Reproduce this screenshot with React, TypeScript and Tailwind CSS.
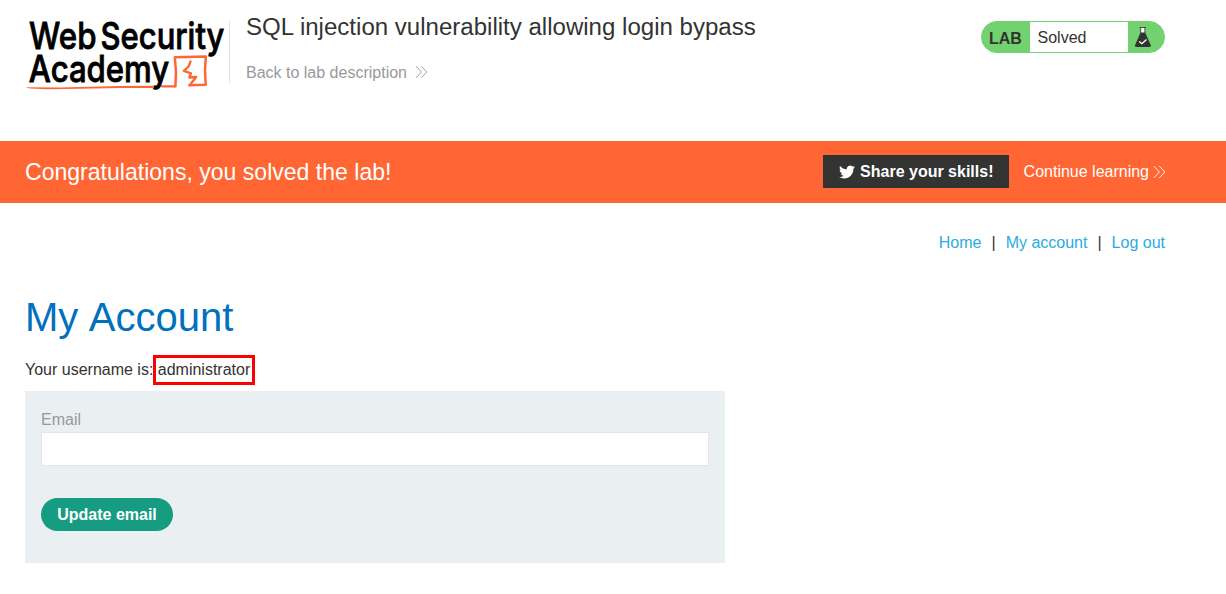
import React from "react";

function Chevrons({ className }: { className: string }) {
  return (
    <svg className={className} width="13" height="14" viewBox="0 0 13 14" fill="none" stroke="currentColor" strokeWidth="0.9">
      <path d="M0.8 1 L6.4 7 L0.8 13 M6.2 1 L11.8 7 L6.2 13" />
    </svg>
  );
}

function Logo() {
  return (
    <svg className="block shrink-0 overflow-visible" width="204" height="80" viewBox="25 15 204 80">
      <g fill="#000" stroke="#000" strokeWidth="0.8" fontFamily="Inter, sans-serif" fontWeight="500" fontSize="36.6">
        <text x="29" y="49.2" textLength="67.5" lengthAdjust="spacingAndGlyphs">Web</text>
        <text x="100.6" y="49.2" textLength="123.8" lengthAdjust="spacingAndGlyphs">Security</text>
        <text x="28.8" y="81.7" textLength="140.4" lengthAdjust="spacingAndGlyphs">Academy</text>
      </g>
      <path fill="#ff6633" d="M25.5 87.2 L60 87.4 L120 86 L154 85.8 L154 88 L120 88.1 L80 88.8 L48 89.2 L30 88.6 Z" />
      <g fill="none" stroke="#ff6633" strokeLinecap="round" strokeLinejoin="round">
        <path strokeWidth="2.2" d="M162 86.4 L175.2 86.3" />
        <path strokeWidth="2.5" d="M175.4 86.3 L176 72 L174.8 57.2 L205.8 56.6 L205 70 L205.7 84.8 L189.3 85.2" />
        <path strokeWidth="2.3" d="M190.5 61.5 L188.6 66.5 L183.8 70.8 L191 73.3 L189.3 77.5 L196.2 77 L190 84.8" />
      </g>
    </svg>
  );
}

function Flask() {
  return (
    <svg width="18" height="22" viewBox="0 0 18 22">
      <path d="M6.8 1.9 V8 L10.8 8 V1.9 Z" fill="#fff" />
      <path d="M5.6 1.5 H12 M6.7 1.5 V7 M10.9 1.5 V7" stroke="#333332" strokeWidth="0.8" fill="none" />
      <path d="M6.5 6.4 H11.1 L16.8 19.2 Q17.2 21 15.5 21 H2.3 Q0.6 21 1 19.2 Z" fill="#333332" />
      <path d="M5.2 15.4 L7.9 17.7 L12.5 13.5" fill="none" stroke="#fff" strokeWidth="1.3" />
    </svg>
  );
}

function Bird() {
  return (
    <svg width="16" height="14" viewBox="0 2 24 20" fill="#fff">
      <path d="M23.95 4.57a10 10 0 0 1-2.82.78 4.96 4.96 0 0 0 2.16-2.72c-.95.55-2 .95-3.13 1.18a4.92 4.92 0 0 0-8.38 4.48C7.69 8.1 4.07 6.13 1.64 3.16a4.82 4.82 0 0 0-.67 2.48c0 1.71.87 3.21 2.19 4.1a4.9 4.9 0 0 1-2.23-.62v.06a4.92 4.92 0 0 0 3.95 4.83 5 5 0 0 1-2.21.08 4.94 4.94 0 0 0 4.6 3.42A9.87 9.87 0 0 1 0 19.54a13.99 13.99 0 0 0 7.56 2.21c9.05 0 14-7.5 14-13.98 0-.21 0-.42-.02-.63a9.94 9.94 0 0 0 2.41-2.57Z" />
    </svg>
  );
}

export default function App() {
  return (
    <div className="h-[594px] w-[1226px] overflow-hidden bg-white font-['Liberation_Sans',sans-serif] text-base leading-5 text-[#333332]">
      <header className="flex h-[141px] items-start pr-[61px] pl-[25px]">
        <div className="pt-[15px]">
          <Logo />
        </div>
        <div className="mt-[21px] h-[62px] w-px bg-[#e2e2e2]" />
        <div className="ml-4 flex-1 pt-[13px]">
          <h2 className="text-[24.05px] leading-7">SQL injection vulnerability allowing login bypass</h2>
          <a className="mt-[22px] flex items-center text-[#999999]">
            Back to lab description
            <Chevrons className="-mt-0.5 ml-2" />
          </a>
        </div>
        <div className="mt-[21px] flex h-8 w-[184px] overflow-hidden rounded-full border border-[#72d26f] bg-[#72d26f]">
          <span className="w-12 pt-[7px] pl-[7px] font-bold">LAB</span>
          <span className="w-[98px] bg-white pt-1.5 pl-[7.5px]">Solved</span>
          <span className="pt-1 pl-1.5">
            <Flask />
          </span>
        </div>
      </header>

      <section className="flex h-[62px] items-center bg-[#ff6633] pr-[60px] pl-[25px] text-white">
        <h4 className="flex-1 text-[23.05px] leading-7">Congratulations, you solved the lab!</h4>
        <button className="-mt-px mb-px flex h-[33px] w-[186px] items-center bg-[#333332] pt-0.5 pl-4 font-bold">
          <Bird />
          <span className="ml-[5px]">Share your skills!</span>
        </button>
        <a className="ml-[14.5px] flex items-center">
          Continue learning
          <Chevrons className="ml-1" />
        </a>
      </section>

      <nav className="flex justify-end gap-2.5 pt-[30px] pr-[61px] text-[#29abe2]">
        <a>Home</a>
        <span className="text-[#333332]">|</span>
        <a>My account</a>
        <span className="text-[#333332]">|</span>
        <a>Log out</a>
      </nav>

      <main className="pt-10 pl-[25px]">
        <h1 className="text-[40px] leading-[48px] text-[#0071bc] [word-spacing:1.5px]">My Account</h1>
        <p className="mt-3.5 flex h-[30px] items-center">
          Your username is:
          <span className="-ml-[0.6px] flex h-[30px] w-[102.5px] items-center border-3 border-[#ff0000] pl-0.5">administrator</span>
        </p>
        <form className="mt-1.5 flex h-[172px] w-[700px] flex-col items-start bg-[#eaeff2] px-4 pt-[19px]">
          <label className="text-[#999999]">Email</label>
          <input className="mt-0.5 h-[34px] w-full border border-[#e2e6e8] bg-white px-2 outline-none" />
          <button type="button" className="mt-8 h-[33px] w-[132px] rounded-full bg-[#169c80] font-bold text-white">
            Update email
          </button>
        </form>
      </main>
    </div>
  );
}
